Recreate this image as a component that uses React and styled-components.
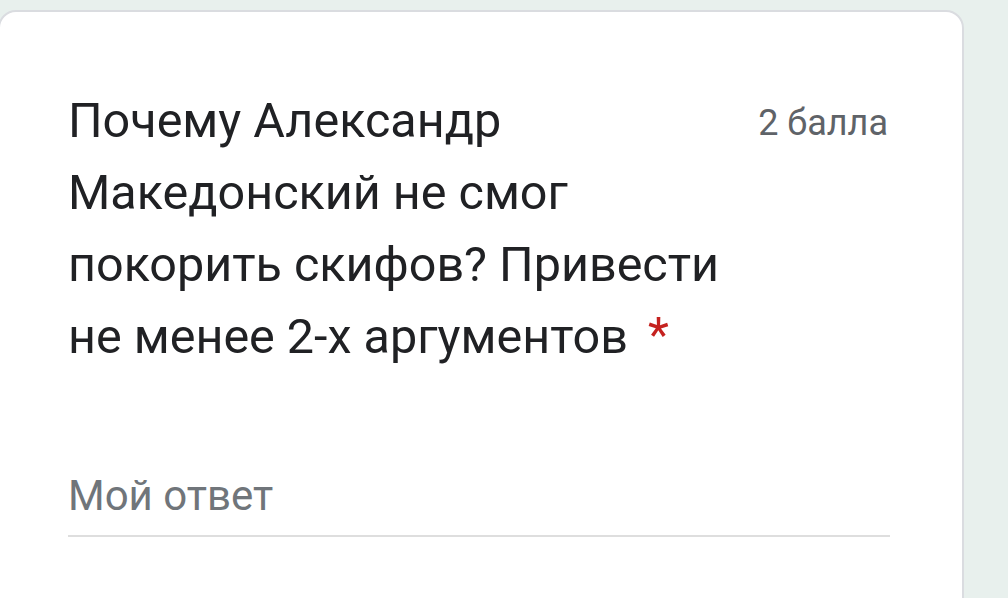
import React from "react";
import styled, { createGlobalStyle } from "styled-components";

const GlobalStyle = createGlobalStyle`
  html, body {
    margin: 0;
    padding: 0;
    background: #e8f0ed;
    font-family: Roboto, "Noto Sans", Arial, sans-serif;
    overflow: hidden;
  }
`;

const Page = styled.div`
  width: 1008px;
  height: 598px;
  padding-top: 10px;
  box-sizing: border-box;
  overflow: hidden;
`;

const Card = styled.div`
  width: 966px;
  height: 620px;
  margin-left: -2px;
  box-sizing: border-box;
  background: #fff;
  border: 2px solid #dadce0;
  border-radius: 18px;
  padding: 73px 74px 0 68px;
`;

const Header = styled.div`
  display: flex;
  justify-content: space-between;
  align-items: flex-start;
`;

const Title = styled.div`
  width: 680px;
  font-size: 48.5px;
  line-height: 72px;
  color: #202124;
`;

const Required = styled.span`
  position: relative;
  top: -2px;
  color: #c5221f;
  margin-left: 20px;
`;

const Points = styled.div`
  margin-top: 2px;
  font-size: 36px;
  line-height: 72px;
  color: #5f6368;
  white-space: nowrap;
`;

const Answer = styled.div`
  margin-top: 99px;
  width: 822px;
  border-bottom: 2px solid #dedede;
  padding-bottom: 15px;
  font-size: 42px;
  line-height: 48px;
  color: #70757a;
`;

export default function App() {
  return (
    <Page>
      <GlobalStyle />
      <Card>
        <Header>
          <Title>
            Почему Александр<br />
            Македонский не смог<br />
            покорить скифов? Привести<br />
            не менее 2-х аргументов<Required>*</Required>
          </Title>
          <Points>2 балла</Points>
        </Header>
        <Answer>Мой ответ</Answer>
      </Card>
    </Page>
  );
}
